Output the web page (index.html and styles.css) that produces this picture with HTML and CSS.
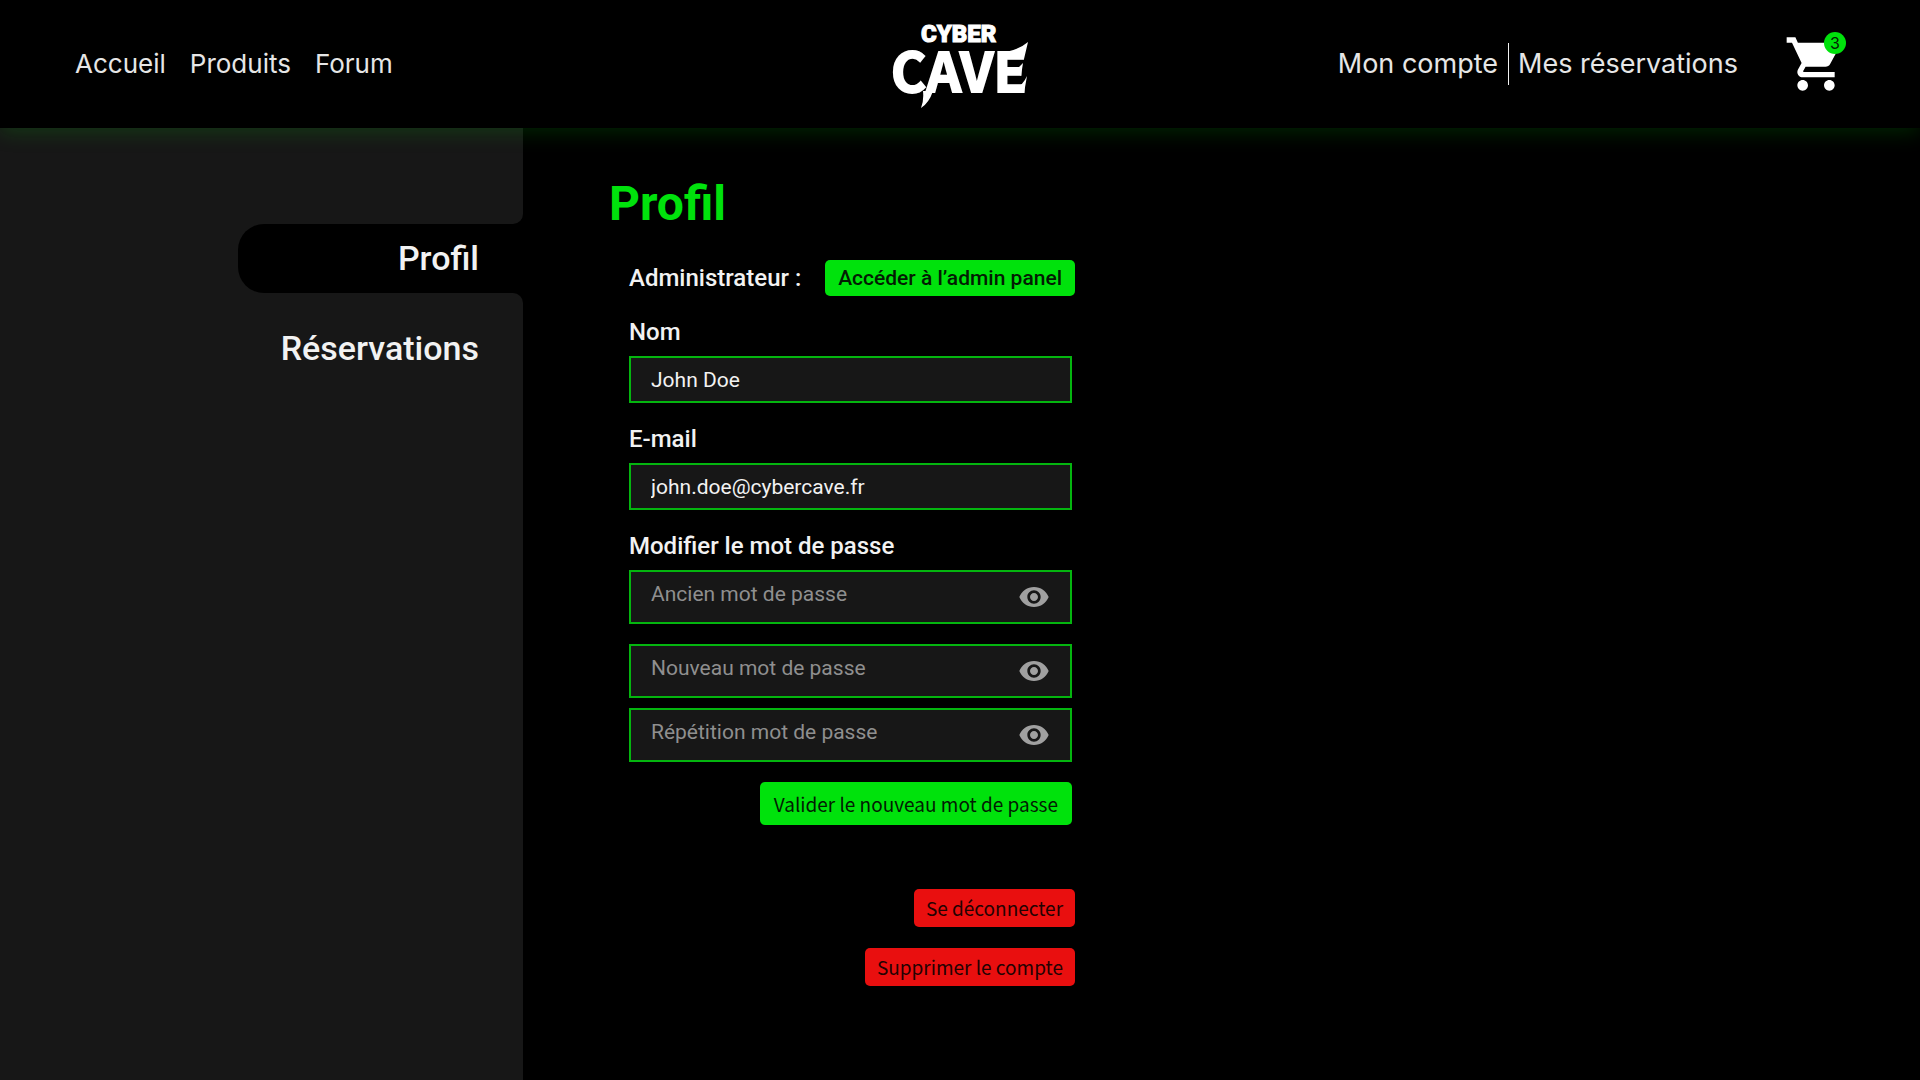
FILE: index.html
```html
<!DOCTYPE html>
<html lang="fr">
<head>
<meta charset="utf-8">
<meta name="viewport" content="width=device-width, initial-scale=1">
<title>Cyber Cave – Profil</title>
<link rel="stylesheet" href="styles.css">
</head>
<body>
<svg class="sprite" aria-hidden="true">
  <symbol id="eye" viewBox="0 0 24 24">
    <path d="M12 4.5C7 4.500 2.730 7.610 1 12c1.730 4.390 6 7.500 11 7.500s9.270-3.110 11-7.500c-1.730-4.390-6-7.500-11-7.500zM12 17c-2.760 0-5-2.240-5-5s2.240-5 5-5 5 2.240 5 5-2.240 5-5 5zm0-8c-1.660 0-3 1.340-3 3s1.340 3 3 3 3-1.340 3-3-1.340-3-3-3z"/>
  </symbol>
</svg>
<header class="topbar">
  <nav class="nav" aria-label="Navigation principale">
    <a href="#accueil">Accueil</a>
    <a href="#produits">Produits</a>
    <a href="#forum">Forum</a>
  </nav>
  <a class="logo" href="#accueil" aria-label="Cyber Cave">
    <svg width="144" height="96" viewBox="0 0 144 96">
      <text class="logo-cyber" x="33" y="26">CYBER</text>
      <text class="logo-cave" x="3" y="76">CAVE</text>
      <path class="logo-spurs" d="M35 75L45 75Q41 87 33 92Q36 85 35 75ZM118 36Q132 33 140 26L136 43L130 37ZM128 72Q135 69 139 60L136 77L128 77ZM128 54L135 47L133 60Z"/>
    </svg>
  </a>
  <div class="account">
    <nav class="account-links" aria-label="Compte">
      <a href="#compte">Mon compte</a>
      <a href="#reservations">Mes réservations</a>
    </nav>
    <a class="cart" href="#panier" aria-label="Panier, 3 articles">
      <svg width="64" height="64" viewBox="0 0 24 24">
        <path d="M7 18c-1.100 0-1.990.9-1.990 2S5.900 22 7 22s2-.9 2-2-.9-2-2-2zM1 2v2h2l3.600 7.590-1.350 2.450c-.16.28-.25.61-.25.96 0 1.100.9 2 2 2h12v-2H7.420c-.14 0-.25-.11-.25-.25l.03-.12.9-1.630h7.450c.75 0 1.410-.41 1.750-1.030l3.580-6.490c.08-.14.12-.31.12-.48 0-.55-.45-1-1-1H5.210l-.94-2H1zm16 16c-1.100 0-1.990.9-1.990 2s.89 2 1.990 2 2-.9 2-2-.9-2-2-2z"/>
      </svg>
      <span class="cart-count">3</span>
    </a>
  </div>
</header>
<div class="layout">
  <aside class="sidebar">
    <div class="side-top"></div>
    <a class="side-link side-current" href="#profil" aria-current="page"><span>Profil</span></a>
    <div class="side-rest">
      <a class="side-link" href="#reservations">Réservations</a>
    </div>
  </aside>
  <main class="content">
    <h1>Profil</h1>
    <form class="profile">
      <div class="admin">
        <span class="label">Administrateur :</span>
        <button class="btn btn-admin" type="button">Accéder à l’admin panel</button>
      </div>
      <label class="label" for="nom">Nom</label>
      <div class="field"><input id="nom" type="text" value="John Doe"></div>
      <label class="label" for="email">E-mail</label>
      <div class="field"><input id="email" type="email" value="john.doe@cybercave.fr"></div>
      <label class="label" for="ancien">Modifier le mot de passe</label>
      <div class="field secret">
        <input id="ancien" type="password" placeholder="Ancien mot de passe">
        <button class="reveal" type="button" aria-label="Afficher"><svg width="32" height="32"><use href="#eye"/></svg></button>
      </div>
      <div class="pair">
        <div class="field secret">
          <input type="password" placeholder="Nouveau mot de passe" aria-label="Nouveau mot de passe">
          <button class="reveal" type="button" aria-label="Afficher"><svg width="32" height="32"><use href="#eye"/></svg></button>
        </div>
        <div class="field secret">
          <input type="password" placeholder="Répétition mot de passe" aria-label="Répétition mot de passe">
          <button class="reveal" type="button" aria-label="Afficher"><svg width="32" height="32"><use href="#eye"/></svg></button>
        </div>
      </div>
      <button class="btn btn-submit" type="submit">Valider le nouveau mot de passe</button>
      <div class="danger">
        <button class="btn btn-danger" type="button">Se déconnecter</button>
        <button class="btn btn-danger" type="button">Supprimer le compte</button>
      </div>
    </form>
  </main>
</div>
</body>
</html>
```
FILE: styles.css
```css
:root {
  --green: #00e20c;
  --border: #04b50f;
  --panel: #171717;
  --red: #e90f0f;
}

* { box-sizing: border-box; }

body {
  margin: 0;
  min-height: 100vh;
  display: flex;
  flex-direction: column;
  background: #000;
  color: #f2f2f2;
  font-family: Roboto, sans-serif;
}

a { color: inherit; text-decoration: none; }

.sprite { display: none; }

.topbar {
  position: relative;
  z-index: 1;
  display: grid;
  grid-template-columns: 1fr auto 1fr;
  align-items: center;
  height: 128px;
  padding: 0 72px;
  background: #000;
  box-shadow: 0 4px 20px rgba(0, 226, 12, 0.17);
  color: #e6e6e6;
  font: 400 27px/32px Inter, sans-serif;
}

.nav {
  display: flex;
  gap: 24px;
  padding-left: 3px;
  font-size: 26px;
}

.logo { display: block; height: 96px; }
.logo text { fill: #fff; stroke: #fff; }
.logo-cyber { font: 900 24px Roboto, sans-serif; }
.logo-cave { font: 700 54px "Noto Sans CJK JP", sans-serif; stroke-width: 2px; }
.logo-spurs { fill: #fff; }

.account {
  display: flex;
  justify-content: flex-end;
  align-items: center;
  gap: 46px;
}

.account-links { display: flex; align-items: center; }
.account-links a { line-height: 42px; }
.account-links a + a {
  margin-left: 10px;
  padding-left: 9px;
  border-left: 1px solid #f2f2f2;
}

.cart { position: relative; width: 64px; height: 64px; }
.cart svg { display: block; fill: #fff; }
.cart-count {
  position: absolute;
  top: 0;
  right: 2px;
  width: 22px;
  height: 22px;
  border-radius: 50%;
  background: var(--green);
  color: #052005;
  font-size: 16px;
  line-height: 22px;
  text-align: center;
}

.layout {
  flex: 1;
  display: grid;
  grid-template-columns: minmax(320px, 523px) 1fr;
}

.sidebar {
  display: flex;
  flex-direction: column;
  font-weight: 500;
  font-size: 34px;
  line-height: 69px;
  text-align: right;
}

.side-top {
  height: 96px;
  background: var(--panel);
  border-bottom-right-radius: 10px;
}

.side-link { display: block; }
.side-current { padding-left: 238px; background: var(--panel); }
.side-current span {
  display: block;
  padding-right: 44px;
  background: #000;
  border-radius: 26px 0 0 26px;
}

.side-rest {
  flex: 1;
  padding: 21px 44px 0 0;
  background: var(--panel);
  border-top-right-radius: 10px;
}

.content { padding: 48px 40px 40px 86px; }

h1 {
  margin: 0;
  color: var(--green);
  font-weight: 700;
  font-size: 48px;
  line-height: 56px;
}

.profile {
  display: flex;
  flex-direction: column;
  max-width: 466px;
  padding: 28px 0 0 20px;
}

.admin {
  display: flex;
  justify-content: space-between;
  align-items: center;
}

.label { font-weight: 500; font-size: 24px; line-height: 28px; }
label.label { margin: 22px 0 10px; }

.field {
  display: flex;
  margin-right: 3px;
  border: 2px solid var(--border);
  background: var(--panel);
}

.field input {
  flex: 1;
  min-width: 0;
  height: 43px;
  padding: 0 20px;
  border: 0;
  background: none;
  color: #f2f2f2;
  font: 400 21px/28px Roboto, sans-serif;
}

.field input::placeholder { color: #8f8f8f; opacity: 1; }

.secret { height: 54px; }

.reveal {
  display: flex;
  align-items: center;
  padding: 0 20px 0 0;
  border: 0;
  background: none;
}
.reveal svg { fill: #a0a0a0; }

.pair {
  display: flex;
  flex-direction: column;
  gap: 10px;
  margin: 20px 0;
}

.btn {
  border: 0;
  border-radius: 5px;
  color: #031c03;
  font: 400 19px/28px "Noto Sans CJK JP", sans-serif;
}

.btn-admin {
  height: 36px;
  padding: 0 13px;
  background: var(--green);
  font-family: Roboto, sans-serif;
  font-size: 21px;
  font-weight: 500;
}

.btn-submit {
  align-self: flex-end;
  height: 43px;
  margin-right: 3px;
  padding: 0 14px;
  background: var(--green);
}

.danger {
  display: flex;
  flex-direction: column;
  align-items: flex-end;
  gap: 21px;
  margin-top: 64px;
}

.btn-danger {
  height: 38px;
  padding: 0 12px;
  background: var(--red);
  color: #230202;
}
```
